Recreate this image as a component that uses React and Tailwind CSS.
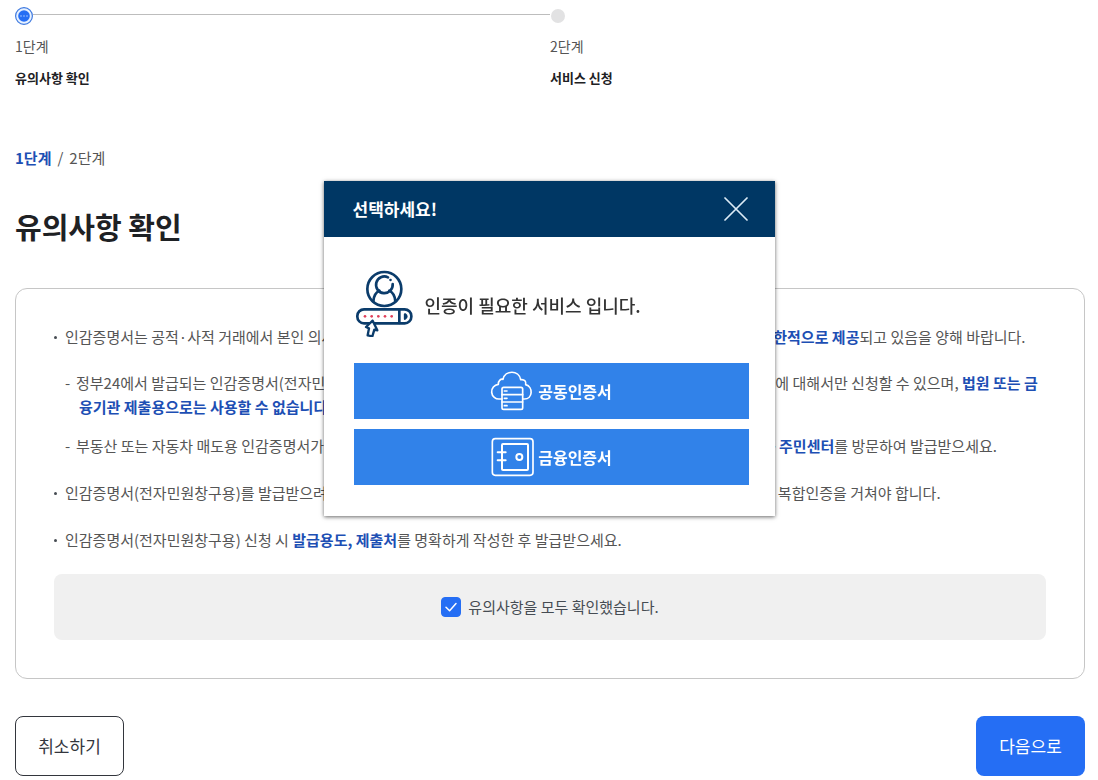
import { useState } from 'react'

const steps = [
  { label: '1단계', title: '유의사항 확인', active: true },
  { label: '2단계', title: '서비스 신청', active: false },
]

const Strong = ({ children }) => <strong className="font-bold text-[#1d4fb4]">{children}</strong>

const StepDot = ({ active }) =>
  active ? (
    <svg className="h-[18px] w-[18px] shrink-0" viewBox="0 0 18 18" aria-hidden="true">
      <circle cx="9" cy="9" r="8.4" fill="#e8f2ff" stroke="#3f7ae0" strokeWidth="1.2" />
      <circle cx="9" cy="9" r="5.8" fill="#256ef4" />
      <circle cx="6" cy="9" r="0.8" fill="#a9c8ff" />
      <circle cx="9" cy="9" r="0.8" fill="#a9c8ff" />
      <circle cx="12" cy="9" r="0.8" fill="#a9c8ff" />
    </svg>
  ) : (
    <span className="ml-px h-[14px] w-[14px] shrink-0 rounded-full bg-[#e2e2e3]" />
  )

const Stepper = () => (
  <ol className="grid grid-cols-2">
    {steps.map((step, i) => (
      <li key={step.label}>
        <div className="flex h-[18px] items-center">
          <StepDot active={step.active} />
          {i < steps.length - 1 && <span className="mb-1 h-px flex-1 bg-[#bdbdbd]" />}
        </div>
        <p className="mt-[11px] text-[14px] leading-5 text-[#555]">{step.label}</p>
        <p className="mt-3 text-[13px] leading-5 font-bold text-[#1e2124]">{step.title}</p>
      </li>
    ))}
  </ol>
)

const Item = ({ children, sub }) => (
  <li className="relative pl-[11px]">
    <span className="absolute top-[11px] left-0 h-[3px] w-[3px] rounded-full bg-[#464c53]" />
    <p>{children}</p>
    {sub}
  </li>
)

const SubItem = ({ children }) => (
  <li className="pl-[14px] -indent-[14px]">
    <span className="inline-block w-[11px] indent-0">-</span>
    {children}
  </li>
)

const Notice = () => {
  const [checked, setChecked] = useState(true)

  return (
    <section className="mt-[42px] rounded-xl border border-[#c6c6c6] px-[38px] pt-9 pb-[38px]">
      <ul className="flex flex-col gap-[23px] text-[15px] leading-6 text-[#555]">
        <Item
          sub={
            <ul className="mt-[22px] flex flex-col gap-[15px]">
              <SubItem>
                정부24에서 발급되는 인감증명서(전자민원창구용)는 일반용 인감증명서 중 행정기관, 공공기관 등에 제출하는 용도에 대해서만 신청할 수
                있으며, <Strong>법원 또는 금융기관 제출용으로는 사용할 수 없습니다.</Strong>
              </SubItem>
              <SubItem>
                부동산 또는 자동차 매도용 인감증명서가 필요한 경우에는 본인이 직접 신분증 및 도장을 지참하고 가까운{' '}
                <Strong>읍·면·동 주민센터</Strong>를 방문하여 발급받으세요.
              </SubItem>
            </ul>
          }
        >
          인감증명서는 공적·사적 거래에서 본인 의사를 확인하는 중요한 서류이므로, 온라인 발급은 일부 용도 등에 한하여{' '}
          <Strong>제한적으로 제공</Strong>되고 있음을 양해 바랍니다.
        </Item>
        <Item>
          인감증명서(전자민원창구용)를 발급받으려면 공동인증서 또는 금융인증서 로그인과 함께 휴대전화 및 지문 인증 등의 복합인증을 거쳐야 합니다.
        </Item>
        <Item>
          인감증명서(전자민원창구용) 신청 시 <Strong>발급용도, 제출처</Strong>를 명확하게 작성한 후 발급받으세요.
        </Item>
      </ul>
      <div className="mt-[22px] flex h-[66px] items-center justify-center rounded-lg bg-[#f0f0f0]">
        <label htmlFor="agree" className="flex items-center gap-[7px] text-[15px] leading-6 text-[#464c53]">
          <span className="grid place-items-center">
            <input
              id="agree"
              type="checkbox"
              checked={checked}
              onChange={(e) => setChecked(e.target.checked)}
              className="peer col-start-1 row-start-1 h-5 w-5 appearance-none rounded-[4px] border border-[#8a949e] bg-white checked:border-[#256ef4] checked:bg-[#256ef4]"
            />
            <svg
              className="pointer-events-none col-start-1 row-start-1 hidden h-5 w-5 peer-checked:block"
              viewBox="0 0 20 20"
              fill="none"
              stroke="#fff"
              strokeWidth="1.5"
              strokeLinecap="round"
              strokeLinejoin="round"
            >
              <path d="M5 10.2l3.6 3.6L15 6.6" />
            </svg>
          </span>
          유의사항을 모두 확인했습니다.
        </label>
      </div>
    </section>
  )
}

const UserIcon = () => (
  <svg className="h-[68px] w-[59px]" viewBox="27 28 177 204" fill="none" stroke="#0b3c6b" strokeWidth="8" strokeLinecap="round" strokeLinejoin="round">
    <circle cx="118" cy="88" r="51" />
    <path d="M129 53a25 25 0 1 0 14 20" />
    <path d="M136 61h1" strokeWidth="7" />
    <path d="M85 125c1-15 8-27 18-32M151 125c-1-15-8-27-18-32" />
    <rect x="37" y="149" width="162" height="42" rx="20" />
    <path d="M163 150v40" />
    <path d="M180 164q9 6 0 13z" strokeWidth="7" />
    <path d="M83 183l-20 19 9 4-4 21 14 3 6-20 9 2z" fill="#fff" strokeWidth="7" />
    <g fill="#e0405a" stroke="none">
      <circle cx="60" cy="170" r="4" />
      <circle cx="80" cy="170" r="4" />
      <circle cx="100" cy="170" r="4" />
      <circle cx="120" cy="170" r="4" />
      <circle cx="140" cy="170" r="4" />
    </g>
  </svg>
)

const CloudServerIcon = () => (
  <svg className="h-10 w-11" viewBox="31 34 132 120" fill="none" stroke="#fff" strokeWidth="5" strokeLinecap="round" strokeLinejoin="round">
    <path d="M67 118H60a22 22 0 0 1-4-44c-1-10 7-17 14-15 6-28 48-29 53 1 12-2 17 6 15 15 24 7 21 43-4 43h-5" />
    <rect x="67" y="83" width="62" height="66" rx="5" />
    <path d="M67 105h62M67 127h62M74 94h8M74 116h8M74 138h8" />
  </svg>
)

const SafeIcon = () => (
  <svg className="h-10 w-11" viewBox="31 230 132 120" fill="none" stroke="#fff" strokeWidth="5" strokeLinecap="round" strokeLinejoin="round">
    <rect x="38" y="235" width="122" height="110" rx="9" />
    <rect x="67" y="251" width="78" height="78" rx="3" strokeWidth="6" />
    <circle cx="119" cy="290" r="9" strokeWidth="6" />
    <path d="M54 276h24M54 300h24" strokeWidth="6" />
  </svg>
)

const CertButton = ({ icon, children }) => (
  <button type="button" className="flex h-14 w-full items-center justify-center gap-1 bg-[#3182e9] text-[16px] font-bold text-white">
    {icon}
    {children}
  </button>
)

const CertModal = ({ onClose }) => (
  <div className="fixed inset-x-0 top-[181px] flex justify-center">
    <div role="dialog" aria-labelledby="cert-title" className="w-[451px] bg-white shadow-[0_1px_4px_rgba(0,0,0,0.6)]">
      <header className="flex h-14 items-center justify-between bg-[#003764] pr-[27px] pl-[29px]">
        <h2 id="cert-title" className="text-[17px] leading-6 font-bold text-white">
          선택하세요!
        </h2>
        <button type="button" aria-label="닫기" onClick={onClose}>
          <svg className="h-6 w-6" viewBox="0 0 24 24" stroke="#dcebf7" strokeWidth="1.7" strokeLinecap="round">
            <path d="M1 1l22 22M23 1L1 23" />
          </svg>
        </button>
      </header>
      <div className="pt-8 pr-[26px] pb-[31px] pl-[30px]">
        <div className="flex items-center gap-3">
          <UserIcon />
          <p className="pt-1 text-[18px] leading-7 font-medium text-[#333]">인증이 필요한 서비스 입니다.</p>
        </div>
        <div className="mt-[26px] flex flex-col gap-[10px]">
          <CertButton icon={<CloudServerIcon />}>공동인증서</CertButton>
          <CertButton icon={<SafeIcon />}>금융인증서</CertButton>
        </div>
      </div>
    </div>
  </div>
)

export default function App() {
  const [open, setOpen] = useState(true)

  return (
    <div className="bg-white pt-[7px] pr-[13px] pb-1 pl-[15px] font-['Noto_Sans_CJK_KR',sans-serif]">
      <Stepper />
      <main>
        <p className="mt-[60px] text-[15px] leading-5 text-[#555]">
          <Strong>1단계</Strong>
          <span className="mx-[6px]">/</span>2단계
        </p>
        <h1 className="mt-[38px] text-[29px] leading-10 font-bold text-[#1e2124]">유의사항 확인</h1>
        <Notice />
        <div className="mt-[37px] flex justify-between text-[17px]">
          <button type="button" className="h-[60px] w-[109px] rounded-lg border border-[#33363d] bg-white text-[#33363d]">
            취소하기
          </button>
          <button type="button" className="h-[60px] w-[109px] rounded-lg bg-[#256ef4] text-white">
            다음으로
          </button>
        </div>
      </main>
      {open && <CertModal onClose={() => setOpen(false)} />}
    </div>
  )
}
